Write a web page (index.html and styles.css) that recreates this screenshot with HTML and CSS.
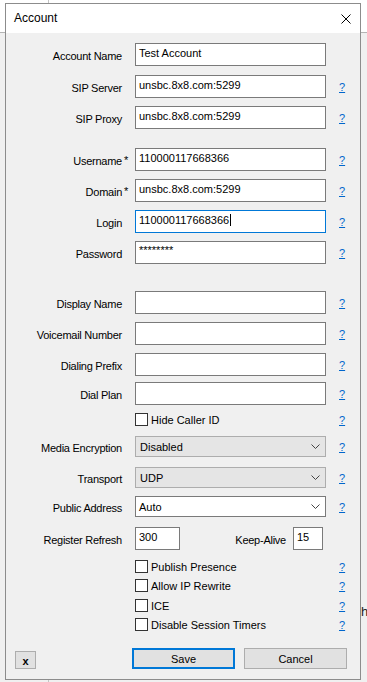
FILE: index.html
```html
<!DOCTYPE html>
<html>
<head>
<meta charset="utf-8">
<link rel="stylesheet" href="styles.css">
</head>
<body>
<div class="behind-h">h</div>
<div class="dialog">
  <div class="titlebar">
    <span class="title">Account</span>
    <svg class="close" width="10" height="10" viewBox="0 0 10 10"><path d="M0.5 0.5 L9.5 9.5 M9.5 0.5 L0.5 9.5" stroke="#000" stroke-width="1" fill="none"/></svg>
  </div>
  <div class="content">
    <div class="row mt10"><div class="lbl">Account Name</div><div class="box">Test Account</div></div>
    <div class="row mt9"><div class="lbl">SIP Server</div><div class="box">unsbc.8x8.com:5299</div><a class="help">?</a></div>
    <div class="row mt8"><div class="lbl">SIP Proxy</div><div class="box">unsbc.8x8.com:5299</div><a class="help">?</a></div>

    <div class="row mt19"><div class="lbl"><span class="req">Username</span></div><div class="box">110000117668366</div><a class="help">?</a></div>
    <div class="row mt8"><div class="lbl"><span class="req">Domain</span></div><div class="box">unsbc.8x8.com:5299</div><a class="help">?</a></div>
    <div class="row mt8"><div class="lbl">Login</div><div class="box focus">110000117668366<span class="caret"></span></div><a class="help">?</a></div>
    <div class="row mt8"><div class="lbl">Password</div><div class="box pw">********</div><a class="help">?</a></div>

    <div class="row mt27"><div class="lbl">Display Name</div><div class="box"></div><a class="help">?</a></div>
    <div class="row mt8"><div class="lbl">Voicemail Number</div><div class="box"></div><a class="help">?</a></div>
    <div class="row mt8"><div class="lbl">Dialing Prefix</div><div class="box"></div><a class="help">?</a></div>
    <div class="row mt6"><div class="lbl">Dial Plan</div><div class="box"></div><a class="help">?</a></div>

    <div class="row chk mt8"><div class="lbl"></div><div class="field"><span class="cb"></span>Hide Caller ID</div><a class="help">?</a></div>

    <div class="row sel mt10"><div class="lbl">Media Encryption</div><div class="combo">Disabled<svg class="chev" width="9" height="5" viewBox="0 0 9 5"><path d="M0.5 0.5 L4.5 4.5 L8.5 0.5" stroke="#444" fill="none"/></svg></div><a class="help">?</a></div>
    <div class="row sel mt10"><div class="lbl">Transport</div><div class="combo">UDP<svg class="chev" width="9" height="5" viewBox="0 0 9 5"><path d="M0.5 0.5 L4.5 4.5 L8.5 0.5" stroke="#444" fill="none"/></svg></div><a class="help">?</a></div>
    <div class="row sel mt8"><div class="lbl">Public Address</div><div class="combo white">Auto<svg class="chev" width="9" height="5" viewBox="0 0 9 5"><path d="M0.5 0.5 L4.5 4.5 L8.5 0.5" stroke="#444" fill="none"/></svg></div><a class="help">?</a></div>

    <div class="row mt10"><div class="lbl">Register Refresh</div><div class="box small">300</div><div class="lbl2">Keep-Alive</div><div class="box tiny">15</div></div>

    <div class="row chk mt10"><div class="lbl"></div><div class="field"><span class="cb"></span>Publish Presence</div><a class="help">?</a></div>
    <div class="row chk mt6"><div class="lbl"></div><div class="field"><span class="cb"></span>Allow IP Rewrite</div><a class="help">?</a></div>
    <div class="row chk mt7"><div class="lbl"></div><div class="field"><span class="cb"></span>ICE</div><a class="help">?</a></div>
    <div class="row chk mt6"><div class="lbl"></div><div class="field"><span class="cb"></span>Disable Session Timers</div><a class="help">?</a></div>

    <div class="footer">
      <div class="btn xbtn">x</div>
      <div class="btn save">Save</div>
      <div class="btn cancel">Cancel</div>
    </div>
  </div>
</div>
</body>
</html>
```
FILE: styles.css
```css
* { box-sizing: border-box; }
html, body { margin: 0; height: 100%; }
body {
  font-family: "Liberation Sans", Arial, sans-serif;
  font-size: 11px;
  color: #000;
  overflow: hidden;
  padding: 3px 0 0 5px;
  position: relative;
  background:
    linear-gradient(to right, transparent 48px, #c4c4c4 48px, #c4c4c4 49px, transparent 49px),
    linear-gradient(to bottom, #fff 0, #fff 32px, #b4b4b4 32px, #b4b4b4 33px, #f0f0f0 33px);
}
.behind-h {
  position: absolute;
  left: 361px;
  top: 604px;
  font-size: 13px;
  color: #222;
}
.dialog {
  position: relative;
  width: 356px;
  height: 677px;
  border: 1px solid #8c8c8c;
  background: #f0f0f0;
  display: flex;
  flex-direction: column;
}
.titlebar {
  height: 29px;
  flex-shrink: 0;
  background: #fff;
  display: flex;
  align-items: center;
  justify-content: space-between;
  padding: 0 9px 2px 8px;
  font-size: 12px;
}
.close { display: block; margin-top: 2px; }
.content {
  display: flex;
  flex-direction: column;
}
.row {
  display: flex;
  align-items: center;
  height: 23px;
  flex-shrink: 0;
}
.row.sel { height: 21px; }
.row.chk { height: 13px; }
.mt6 { margin-top: 6px; }
.mt7 { margin-top: 7px; }
.mt8 { margin-top: 8px; }
.mt9 { margin-top: 9px; }
.mt10 { margin-top: 10px; }
.mt19 { margin-top: 19px; }
.mt27 { margin-top: 27px; }
.lbl {
  width: 116px;
  margin-right: 13px;
  text-align: right;
  white-space: nowrap;
  padding-top: 2px;
  letter-spacing: -0.25px;
}
.req { position: relative; }
.req::after {
  content: "*";
  position: absolute;
  left: calc(100% + 2px);
  top: -1px;
}
.box {
  width: 191px;
  height: 23px;
  background: #fff;
  border: 1px solid #7a7a7a;
  padding: 3px 3px 0;
  line-height: 13px;
  white-space: nowrap;
}
.box.focus { border-color: #0078d7; }
.box.pw { padding-top: 2px; }
.caret {
  display: inline-block;
  width: 1px;
  height: 12px;
  background: #000;
  vertical-align: -2px;
  margin-left: 1px;
}
.box.small { width: 45px; }
.box.tiny { width: 30px; }
.lbl2 {
  width: 106px;
  text-align: right;
  margin-right: 7px;
  padding-top: 2px;
  letter-spacing: -0.25px;
}
.field {
  width: 191px;
  display: flex;
  align-items: center;
}
.cb {
  width: 13px;
  height: 13px;
  border: 1px solid #333;
  background: #fff;
  margin-right: 3px;
  flex-shrink: 0;
}
.combo {
  width: 191px;
  height: 21px;
  border: 1px solid #adadad;
  background: #e5e5e5;
  display: flex;
  align-items: center;
  justify-content: space-between;
  padding: 0 5px 0 4px;
}
.combo.white { background: #fff; border-color: #7a7a7a; padding-left: 3px; }
.chev { display: block; }
.help {
  margin-left: 13px;
  color: #0066cc;
  text-decoration: underline;
  cursor: pointer;
}
.footer {
  margin-top: 17px;
  display: flex;
  align-items: flex-end;
  padding-left: 9px;
}
.btn {
  background: #e1e1e1;
  border: 1px solid #adadad;
  display: flex;
  align-items: center;
  justify-content: center;
}
.xbtn {
  width: 21px;
  height: 18px;
  margin-right: 96px;
  font-weight: bold;
  padding-top: 1px;
}
.save {
  width: 103px;
  height: 21px;
  border: 2px solid #0078d7;
}
.cancel {
  width: 103px;
  height: 21px;
  margin-left: 9px;
}
```
